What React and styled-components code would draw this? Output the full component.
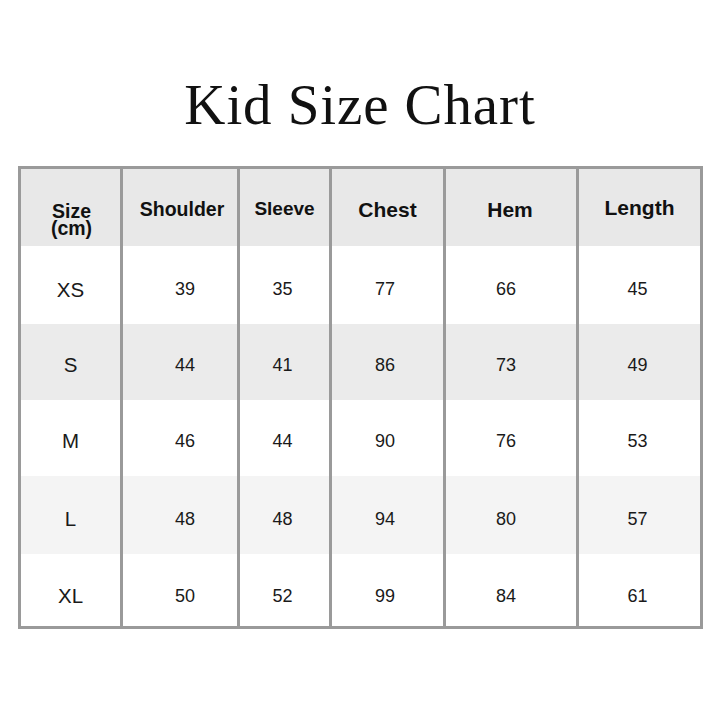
import React from "react";
import styled, { createGlobalStyle } from "styled-components";

const Global = createGlobalStyle`
  html, body { margin: 0; padding: 0; background: #ffffff; }
  body { font-family: "Liberation Sans", Arial, sans-serif; }
`;

const Page = styled.div`
  width: 720px;
  height: 720px;
  box-sizing: border-box;
  padding-top: 76px;
  display: flex;
  flex-direction: column;
  align-items: center;
  background: #fff;
`;

const Title = styled.h1`
  margin: 0 0 32px;
  font-family: "Liberation Serif", "Times New Roman", serif;
  font-weight: 400;
  font-size: 57px;
  line-height: 58px;
  color: #111;
  letter-spacing: 0.9px;
`;

const Table = styled.div`
  width: 685px;
  box-sizing: border-box;
  border: 3px solid #9a9a9a;
  margin-left: 1px;
  display: flex;
  flex-direction: column;
`;

const Row = styled.div`
  display: grid;
  grid-template-columns: 99px 117px 92px 114px 133px 124px;
  height: ${(p) => p.$h}px;
  background: ${(p) => p.$bg};
`;

const Cell = styled.div`
  display: flex;
  align-items: center;
  justify-content: center;
  box-sizing: border-box;
  border-left: ${(p) => (p.$first ? "none" : "3px solid #9a9a9a")};
  padding-top: ${(p) => p.$pt || 0}px;
  padding-left: ${(p) => Math.max(p.$dx || 0, 0)}px;
  padding-right: ${(p) => Math.max(-(p.$dx || 0), 0)}px;
  color: #1a1a1a;
  font-size: ${(p) => p.$fs || 18}px;
`;

const HeadCell = styled(Cell)`
  font-weight: 700;
  color: #111;
  font-size: ${(p) => p.$fs || 20}px;
`;

const Stack = styled.span`
  display: flex;
  flex-direction: column;
  align-items: center;
  line-height: 17px;
`;

const headers = [
  { label: "Shoulder", fs: 19.5, pt: 3, dx: 4 },
  { label: "Sleeve", fs: 19, pt: 3, dx: 0 },
  { label: "Chest", fs: 21, pt: 5, dx: 0 },
  { label: "Hem", fs: 21, pt: 5, dx: -2 },
  { label: "Length", fs: 21, pt: 1, dx: 0 },
];

const rows = [
  { size: "XS", vals: ["39", "35", "77", "66", "45"], bg: "#ffffff", h: 78, pt: 9 },
  { size: "S", vals: ["44", "41", "86", "73", "49"], bg: "#ebebeb", h: 76, pt: 6 },
  { size: "M", vals: ["46", "44", "90", "76", "53"], bg: "#ffffff", h: 76, pt: 6 },
  { size: "L", vals: ["48", "48", "94", "80", "57"], bg: "#f4f4f4", h: 78, pt: 8 },
  { size: "XL", vals: ["50", "52", "99", "84", "61"], bg: "#ffffff", h: 72, pt: 12 },
];

const offsets = [10, -4, -5, -10, -4];

export default function App() {
  return (
    <Page>
      <Global />
      <Title>Kid Size Chart</Title>
      <Table>
        <Row $h={77} $bg="#e8e8e8">
          <HeadCell $first $fs={19.5} $pt={25} $dx={2}>
            <Stack>
              <span>Size</span>
              <span>(cm)</span>
            </Stack>
          </HeadCell>
          {headers.map((h) => (
            <HeadCell key={h.label} $fs={h.fs} $pt={h.pt} $dx={h.dx}>
              {h.label}
            </HeadCell>
          ))}
        </Row>
        {rows.map((r) => (
          <Row key={r.size} $h={r.h} $bg={r.bg}>
            <Cell $first $fs={20.5} $pt={r.pt}>
              {r.size}
            </Cell>
            {r.vals.map((v, i) => (
              <Cell key={i} $pt={r.pt} $dx={offsets[i]}>
                {v}
              </Cell>
            ))}
          </Row>
        ))}
      </Table>
    </Page>
  );
}
